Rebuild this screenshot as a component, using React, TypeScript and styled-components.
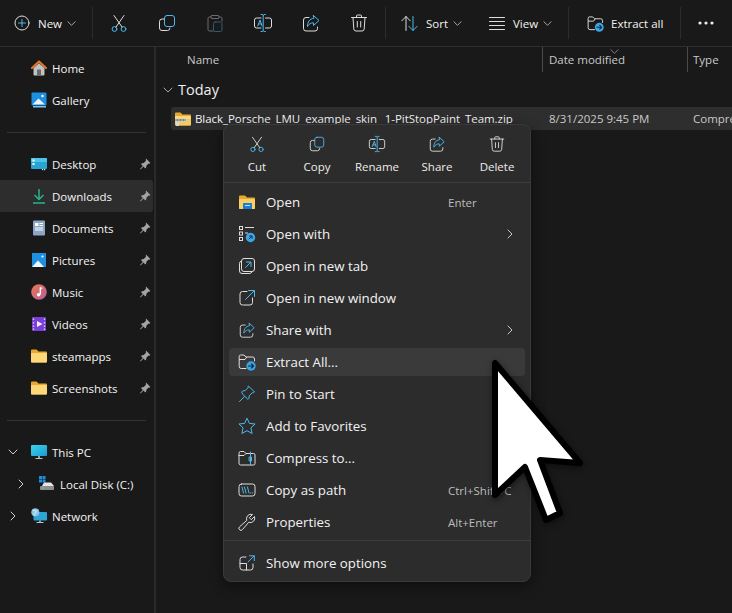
import React from "react";
import styled, { createGlobalStyle } from "styled-components";

const W = "#dedede";
const B = "#4fb8ee";

const Global = createGlobalStyle`
  html, body { margin: 0; padding: 0; background: #191919; }
  * { box-sizing: border-box; }
`;

const Window = styled.div`
  position: relative;
  width: 732px;
  height: 613px;
  overflow: hidden;
  background: #191919;
  color: #fff;
  font-family: "Open Sans", "Noto Sans", sans-serif;
  font-size: 11.5px;
`;

const Toolbar = styled.div`
  display: flex;
  align-items: center;
  height: 47px;
  border-bottom: 1px solid #2f2f2f;
`;

const Separator = styled.div`
  width: 1px;
  height: 32px;
  background: #2c2c2c;
  flex: none;
`;

const IconGroup = styled.div`
  display: flex;
  padding: 0 2px;
`;

const IconButton = styled.div`
  width: 48px;
  height: 32px;
  flex: none;
  display: flex;
  align-items: center;
  justify-content: center;
`;

const MoreButton = styled.div`
  width: 33px;
  height: 32px;
  flex: none;
  display: flex;
  align-items: center;
  justify-content: flex-end;
`;

const LabelButton = styled.div<{ $w: number; $pad: number; $gap?: number }>`
  width: ${(p) => p.$w}px;
  padding-left: ${(p) => p.$pad}px;
  height: 32px;
  flex: none;
  display: flex;
  align-items: center;
  gap: ${(p) => p.$gap ?? 8}px;
  color: #f2f2f2;
  font-size: 11.5px;
`;

const Caret = styled.span`
  display: flex;
  margin-left: -3px;
`;

const Body = styled.div`
  display: flex;
  height: 566px;
`;

const Sidebar = styled.nav`
  width: 156px;
  flex: none;
  padding: 5px 1px 0 0;
  border-right: 2px solid #2a2a2a;
`;

const NavRow = styled.div<{ $active?: boolean }>`
  display: flex;
  align-items: center;
  height: 32px;
  background: ${(p) => (p.$active ? "#2d2d2d" : "transparent")};
  border-radius: 0 3px 3px 0;
`;

const Expander = styled.span<{ $w: number }>`
  width: ${(p) => p.$w}px;
  flex: none;
  display: flex;
  justify-content: flex-end;
  padding-right: 13px;
`;

const NavIcon = styled.span`
  width: 16px;
  height: 16px;
  flex: none;
  display: flex;
  margin-right: 5px;
`;

const NavLabel = styled.span`
  flex: 1;
  white-space: nowrap;
  color: #f4f4f4;
`;

const PinSlot = styled.span`
  width: 12px;
  margin-right: 2px;
  display: flex;
`;

const NavDivider = styled.div`
  height: 32px;
  display: flex;
  align-items: center;
  padding: 0 7px;
  &::after {
    content: "";
    flex: 1;
    height: 1px;
    background: #333;
  }
`;

const Content = styled.main`
  flex: 1;
  min-width: 0;
  position: relative;
  color: #fff;
`;

const HeaderRow = styled.div`
  display: flex;
  height: 25px;
  color: #c9c9c9;
  position: relative;
`;

const HeaderCell = styled.div<{ $w: number; $pad: number; $line?: boolean }>`
  width: ${(p) => p.$w}px;
  flex: none;
  padding: 5px 0 0 ${(p) => p.$pad}px;
  border-left: ${(p) => (p.$line ? "1px solid #4a4a4a" : "none")};
  white-space: nowrap;
`;

const SortMark = styled.span`
  position: absolute;
  left: 454px;
  top: 0;
  display: flex;
`;

const GroupHeader = styled.div`
  display: flex;
  align-items: center;
  height: 35px;
  padding-left: 7px;
  gap: 5px;
  font-size: 14.5px;
  color: #f0f0f0;
`;

const FileRow = styled.div`
  display: flex;
  align-items: center;
  height: 23px;
  margin-left: 15px;
  background: #2e2e2e;
  border-radius: 3px 0 0 3px;
  white-space: nowrap;
  color: #f4f4f4;
`;

const FileName = styled.div`
  width: 378px;
  flex: none;
  display: flex;
  align-items: center;
  gap: 4px;
  padding-left: 4px;
  letter-spacing: -0.055px;
`;

const FileCell = styled.div<{ $w: number }>`
  width: ${(p) => p.$w}px;
  flex: none;
  color: #c9c9c9;
`;

const Menu = styled.div`
  position: absolute;
  left: 223px;
  top: 124px;
  width: 308px;
  height: 458px;
  background: #2c2c2c;
  border: 1px solid #3a3a3a;
  border-radius: 8px;
  box-shadow: 0 4px 14px rgba(0, 0, 0, 0.45);
  font-size: 13.3px;
`;

const QuickBar = styled.div`
  display: grid;
  grid-template-columns: repeat(5, 60px);
  height: 58px;
  padding: 10px 0 0 3px;
  border-bottom: 1px solid #3d3d3d;
`;

const QuickAction = styled.div`
  display: flex;
  flex-direction: column;
  align-items: center;
  gap: 6px;
  font-size: 11.5px;
  color: #ececec;
`;

const MenuList = styled.div`
  padding: 3px 5px 0;
`;

const MenuRow = styled.div<{ $hover?: boolean }>`
  position: relative;
  display: flex;
  align-items: center;
  height: 28px;
  margin: 2px 0 4px;
  padding-left: 9px;
  border-radius: 4px;
  background: ${(p) => (p.$hover ? "#3a3a3a" : "transparent")};
  color: #f2f2f2;
`;

const MenuIcon = styled.span`
  width: 18px;
  height: 18px;
  flex: none;
  display: flex;
  margin-right: 10px;
`;

const MenuText = styled.span`
  flex: none;
  white-space: nowrap;
`;

const Shortcut = styled.span`
  position: absolute;
  left: 219px;
  font-size: 11.5px;
  color: #bdbdbd;
`;

const SubArrow = styled.span`
  position: absolute;
  right: 10px;
  display: flex;
`;

const MenuDivider = styled.div`
  height: 1px;
  background: #3d3d3d;
  margin: 2px -5px 8px;
`;

const Pointer = styled.svg`
  position: absolute;
  left: 484px;
  top: 352px;
  filter: drop-shadow(1px 2px 3px rgba(0, 0, 0, 0.5));
`;

type Sz = { s?: number };

const Svg = ({ s = 20, v = 20, children, o }: { s?: number; v?: number; children: React.ReactNode; o?: number }) => (
  <svg width={s} height={s} viewBox={`0 0 ${v} ${v}`} fill="none" strokeLinecap="round" strokeLinejoin="round" opacity={o}>
    {children}
  </svg>
);

const Chevron = ({ dir, c = "#b8b8b8", s = 10 }: { dir: "down" | "right" | "up"; c?: string; s?: number }) => (
  <svg width={s} height={s} viewBox="0 0 10 10" fill="none" stroke={c} strokeWidth="1" strokeLinecap="round" strokeLinejoin="round">
    {dir === "down" && <path d="M1 3l4 4 4-4" />}
    {dir === "up" && <path d="M1 7l4-4 4 4" />}
    {dir === "right" && <path d="M3 1l4 4-4 4" />}
  </svg>
);

const Plus = () => (
  <Svg s={16} v={16}>
    <circle cx="8" cy="8" r="7" stroke={W} />
    <path d="M8 4.5v7M4.5 8h7" stroke={B} />
  </Svg>
);
const CutI = ({ s = 20 }: Sz) => (
  <Svg s={s}>
    <circle cx="5.5" cy="16" r="2.4" stroke={B} />
    <circle cx="14.5" cy="16" r="2.4" stroke={B} />
    <path d="M7 14L15 2.5M13 14L5 2.5" stroke={W} />
  </Svg>
);
const CopyI = ({ s = 20 }: Sz) => (
  <Svg s={s}>
    <rect x="7.5" y="2.5" width="10" height="11" rx="2.5" stroke={B} />
    <path d="M7 6H5a2.5 2.5 0 0 0-2.5 2.5V15A2.5 2.5 0 0 0 5 17.5h5.500A2.5 2.5 0 0 0 13 15" stroke={W} />
  </Svg>
);
const PasteI = () => (
  <Svg s={20} o={0.42}>
    <path d="M6 4H4.5A1.5 1.5 0 0 0 3 5.5v11A1.5 1.5 0 0 0 4.5 18H8M14 4h1.5A1.5 1.5 0 0 1 17 5.5V8" stroke={W} />
    <rect x="6" y="2.5" width="8" height="3" rx="1" stroke={W} />
    <rect x="8.5" y="9" width="8.5" height="9.5" rx="1.5" stroke={B} />
  </Svg>
);
const RenameI = ({ s = 20 }: Sz) => (
  <Svg s={s}>
    <path d="M8 5H3.5A2 2 0 0 0 1.5 7v6A2 2 0 0 0 3.5 15H8M12.5 5h4A2 2 0 0 1 18.5 7v6a2 2 0 0 1-2 2h-4" stroke={W} />
    <path d="M8 1.5h1.300L10.200 2.300 11.100 1.500H12.400M10.200 2.300V17.700M8 18.500h1.300l.9-.8.9.8h1.300" stroke={B} />
    <path d="M4.800 13L7 7l2 6M5.500 11h3" stroke={B} />
  </Svg>
);
const ShareI = ({ s = 20 }: Sz) => (
  <Svg s={s}>
    <path d="M8 4.5H5A2.5 2.5 0 0 0 2.5 7v8.500A2.5 2.5 0 0 0 5 18h9a2.5 2.5 0 0 0 2.5-2.5V14" stroke={W} />
    <path d="M12.5 2.5l5.500 5-5.500 5V9.800C10 9.800 8 10.800 6.500 13.500 6.500 9 8.500 5.800 12.500 5.300z" stroke={B} />
  </Svg>
);
const DeleteI = ({ s = 20 }: Sz) => (
  <Svg s={s}>
    <path d="M2.5 4.5h15M7.5 4.5V3a1 1 0 0 1 1-1h3a1 1 0 0 1 1 1v1.500M4 4.500l.8 11.500A2.200 2.200 0 0 0 7 18h6a2.200 2.200 0 0 0 2.200-2L16 4.500M8.300 8.500v5.500M11.700 8.500v5.500" stroke={W} />
  </Svg>
);
const SortI = () => (
  <Svg s={17} v={17}>
    <path d="M5 15.5V1.500M.8 5.800L5 1.500l4.200 4.300" stroke={W} />
    <path d="M12 1.500v14M7.800 11.200l4.200 4.300 4.200-4.300" stroke={B} />
  </Svg>
);
const ViewI = () => (
  <Svg s={16} v={16}>
    <path d="M0.500 2.500h15M0.500 6.500h15M0.500 10.500h15M0.500 14.500h15" stroke={W} />
  </Svg>
);
const ExtractI = ({ s = 18 }: Sz) => (
  <svg width={s} height={s} viewBox="0 0 18 18" fill="none" strokeLinecap="round" strokeLinejoin="round">
    <path d="M8 15.500H3.200A2 2 0 0 1 1.200 13.500V3.500A1.500 1.500 0 0 1 2.700 2H6l2 2h6.500A2 2 0 0 1 16.500 6v2M1.500 6.500H7L8.500 4.300" stroke={W} />
    <circle cx="13" cy="13" r="4.700" fill="#3aa6e8" />
    <path d="M10.500 13h5M13.500 11l2 2-2 2" stroke="#10253a" strokeWidth="1.100" />
  </svg>
);
const Dots = () => (
  <svg width="16" height="4" viewBox="0 0 16 4" fill="#ededed">
    <circle cx="2" cy="2" r="1.600" />
    <circle cx="8" cy="2" r="1.600" />
    <circle cx="14" cy="2" r="1.600" />
  </svg>
);

/* Sidebar icons */
const HomeN = () => (
  <svg width="16" height="16" viewBox="0 0 16 16">
    <path d="M2.500 8L8 3.200 13.500 8v6.500a1 1 0 0 1-1 1h-9a1 1 0 0 1-1-1z" fill="#c2c2c2" />
    <rect x="6" y="9.500" width="4" height="6" rx="0.500" fill="#6a6a6a" />
    <path d="M1 8L8 1.500 15 8" fill="none" stroke="#e2752a" strokeWidth="2.200" strokeLinecap="round" strokeLinejoin="round" />
  </svg>
);
const GalleryN = () => (
  <svg width="16" height="16" viewBox="0 0 16 16">
    <rect x="0.500" y="0.500" width="15" height="13" rx="1" fill="#1d8fe0" />
    <path d="M1.500 12.500L7.500 6.500l6.500 6z" fill="#e8f4fc" />
    <circle cx="11.500" cy="4" r="1.200" fill="#fff" />
    <rect x="2" y="14" width="13" height="1.500" fill="#7ec4f0" />
  </svg>
);
const DesktopN = () => (
  <svg width="16" height="16" viewBox="0 0 16 16">
    <rect x="0" y="2" width="16" height="11" rx="1" fill="#27a6d6" />
    <rect x="0" y="2" width="16" height="4" rx="1" fill="#4cc5e8" />
    <rect x="1.500" y="3.500" width="2" height="2" fill="#fff" />
    <rect x="1.500" y="7" width="2" height="2" fill="#fff" />
    <rect x="11" y="13" width="1.200" height="1.200" fill="#ddd" />
    <rect x="13" y="13" width="1.200" height="1.200" fill="#ddd" />
  </svg>
);
const DownloadN = () => (
  <svg width="16" height="16" viewBox="0 0 16 16" fill="none" stroke="#22b78c" strokeWidth="1.500">
    <path d="M8 1v10M3.500 7l4.500 4.500L12.500 7M2 15h12" />
  </svg>
);
const DocN = () => (
  <svg width="16" height="16" viewBox="0 0 16 16">
    <rect x="2" y="0.500" width="12" height="15" rx="1" fill="#8ba5c4" />
    <rect x="4" y="3" width="3.500" height="3" fill="#fff" />
    <path d="M8.500 3.500H12M8.500 5.500H12M4 8H12M4 10H12" stroke="#fff" strokeWidth="1" />
  </svg>
);
const PicN = () => (
  <svg width="16" height="16" viewBox="0 0 16 16">
    <rect x="1" y="1" width="14" height="14" fill="#1f8fe3" />
    <path d="M1 15L7 8.500 13 15z" fill="#f2f8fc" />
    <circle cx="11.500" cy="4.500" r="1.100" fill="#fff" />
  </svg>
);
const MusicN = () => (
  <svg width="16" height="16" viewBox="0 0 16 16">
    <defs>
      <linearGradient id="mg" x1="0" y1="0" x2="1" y2="1">
        <stop offset="0" stopColor="#f0784a" />
        <stop offset="1" stopColor="#b05fa0" />
      </linearGradient>
    </defs>
    <circle cx="8" cy="8" r="7.800" fill="url(#mg)" />
    <path d="M9.300 3.500v7" stroke="#fff" strokeWidth="1.300" />
    <circle cx="7.600" cy="10.800" r="1.800" fill="#fff" />
    <path d="M9.300 3.500l2 1" stroke="#fff" strokeWidth="1.300" />
  </svg>
);
const VideoN = () => (
  <svg width="16" height="16" viewBox="0 0 16 16">
    <rect x="1" y="1" width="14" height="14" rx="1" fill="#7a3fd6" />
    <path d="M6 5l5.500 3L6 11z" fill="#f4eeff" />
    <path d="M2.500 2.500v1.500M2.500 6v1.500M2.500 9.500V11M2.500 12.500V14M13.500 2.500v1.500M13.500 6v1.500M13.500 9.500V11M13.500 12.500V14" stroke="#d8c6f7" strokeWidth="1.300" />
  </svg>
);
const FolderN = () => (
  <svg width="16" height="16" viewBox="0 0 16 16">
    <path d="M0 2.500A1 1 0 0 1 1 1.500h4.500L7.500 3.500H15a1 1 0 0 1 1 1v9a1 1 0 0 1-1 1H1a1 1 0 0 1-1-1z" fill="#e8a82e" />
    <path d="M0 6A1 1 0 0 1 1 5h14a1 1 0 0 1 1 1v7.500a1 1 0 0 1-1 1H1a1 1 0 0 1-1-1z" fill="#fcd879" />
  </svg>
);
const PcN = () => (
  <svg width="16" height="16" viewBox="0 0 16 16">
    <defs>
      <linearGradient id="pg" x1="0" y1="0" x2="1" y2="1">
        <stop offset="0" stopColor="#3cd2ee" />
        <stop offset="1" stopColor="#1a9ad0" />
      </linearGradient>
    </defs>
    <rect x="0" y="1" width="16" height="11" rx="1" fill="url(#pg)" />
    <rect x="7" y="12" width="2" height="2" fill="#8aa0ad" />
    <rect x="4.500" y="14" width="7" height="1" fill="#b8c6ce" />
  </svg>
);
const DiskN = () => (
  <svg width="16" height="16" viewBox="0 0 16 16">
    <rect x="0" y="0" width="3" height="3" fill="#1c8fe0" />
    <rect x="3.500" y="0" width="3" height="3" fill="#1c8fe0" />
    <rect x="0" y="3.500" width="3" height="3" fill="#1c8fe0" />
    <rect x="3.500" y="3.500" width="3" height="3" fill="#1c8fe0" />
    <path d="M3 10L5 6.500h7l3 3.500z" fill="#e6e6e6" />
    <rect x="1" y="10" width="14" height="4" rx="0.800" fill="#8e8e8e" />
    <rect x="3" y="11.500" width="2" height="1" fill="#5fd08a" />
  </svg>
);
const NetN = () => (
  <svg width="16" height="16" viewBox="0 0 16 16">
    <rect x="2.500" y="4" width="13.500" height="8.500" rx="1" fill="#2aa5d6" />
    <rect x="8" y="12.500" width="2" height="1.700" fill="#8aa0ad" />
    <rect x="5.500" y="14" width="7" height="1" fill="#b8c6ce" />
    <circle cx="4.300" cy="4.300" r="4" fill="#8fc6e6" />
    <path d="M2 2.500c2-1 3.500 0 3 1.500S2.500 6 3.500 7.500" stroke="#e6f4fb" fill="none" />
  </svg>
);
const PinN = () => (
  <svg width="12" height="12" viewBox="0 0 12 12" fill="#a3a3a3">
    <path d="M7 .6l4.400 4.400-1 .7-.8-.2L7.400 7.700l-.2 1.900-.9.900-1.800-1.900-3 2.800-.5-.5 2.800-3L2 6.100l.9-.9 1.900-.2 2.200-2.200-.2-.8z" />
  </svg>
);

const ZipI = () => (
  <svg width="16" height="16" viewBox="0 0 16 16">
    <path d="M0 2.500A1 1 0 0 1 1 1.500h4.500L7.500 3.500H15a1 1 0 0 1 1 1v9a1 1 0 0 1-1 1H1a1 1 0 0 1-1-1z" fill="#e8a82e" />
    <path d="M0 6A1 1 0 0 1 1 5h14a1 1 0 0 1 1 1v2.500H0z" fill="#fcd879" />
    <path d="M0 8.500h16v5a1 1 0 0 1-1 1H1a1 1 0 0 1-1-1z" fill="#f4c862" />
    <rect x="0" y="7.500" width="12" height="3" fill="#cfcfcf" />
    <path d="M1 8v2M2.500 8v2M4 8v2M5.500 8v2M7 8v2M8.500 8v2M10 8v2" stroke="#666" strokeWidth="0.800" />
    <rect x="1" y="11" width="3" height="4" rx="0.500" fill="#d8d8d8" />
  </svg>
);

/* Menu icons */
const OpenM = () => (
  <svg width="18" height="18" viewBox="0 0 18 18">
    <path d="M1 3.500A1 1 0 0 1 2 2.500h5L9 4.500h7a1 1 0 0 1 1 1V15a1 1 0 0 1-1 1H2a1 1 0 0 1-1-1z" fill="#e8a82e" />
    <path d="M1 7a1 1 0 0 1 1-1h14a1 1 0 0 1 1 1v8a1 1 0 0 1-1 1H2a1 1 0 0 1-1-1z" fill="#fbcf62" />
    <rect x="5" y="10" width="9" height="6" rx="0.500" fill="#1a7fd4" />
    <rect x="7" y="12" width="5" height="1" fill="#bfe0f8" />
  </svg>
);
const OpenWithM = () => (
  <svg width="18" height="18" viewBox="0 0 18 18" fill="none">
    <rect x="1.500" y="1.500" width="3" height="3" stroke={W} />
    <rect x="1.500" y="7" width="3" height="3" stroke={W} />
    <rect x="1.500" y="12.500" width="3" height="3" stroke={W} />
    <path d="M7 2.500h9M7 8h3" stroke={W} />
    <circle cx="12.500" cy="12.500" r="4.700" fill="#3aa6e8" />
    <path d="M10.800 14.200l3-3M11.300 11h2.700v2.700" stroke="#10253a" />
  </svg>
);
const NewTabM = () => (
  <svg width="18" height="18" viewBox="0 0 18 18" fill="none" strokeLinecap="round">
    <rect x="3.500" y="1.500" width="13" height="13" rx="2.500" stroke={W} />
    <path d="M3 4.200A2.200 2.200 0 0 0 1.500 6.300v7.700A2.500 2.500 0 0 0 4 16.500h7.700a2.200 2.200 0 0 0 2.100-1.500" stroke={W} />
    <path d="M7.500 10.500l5-5M8.500 5h4.500v4.500" stroke={B} />
  </svg>
);
const NewWinM = () => (
  <svg width="18" height="18" viewBox="0 0 18 18" fill="none" strokeLinecap="round">
    <path d="M9 2.500H4.500A2.500 2.500 0 0 0 2 5v8.500A2.500 2.500 0 0 0 4.500 16H12a2.500 2.500 0 0 0 2.500-2.500V9" stroke={W} />
    <path d="M7.500 10.500L16 2M10.500 1.500H16.500V7.500" stroke={B} />
  </svg>
);
const PinM = () => (
  <svg width="18" height="18" viewBox="0 0 18 18" fill="none" stroke={B} strokeLinejoin="round" strokeLinecap="round">
    <path d="M11 1.500l5.500 5.500-1.200.9-1-.2-3 3-.3 2.500-1.200 1.200-2.300-2.400-2.200-2.200L3.500 7.100l1.200-1.200 2.500-.3 3-3-.2-1z" />
    <path d="M6.500 11.500L1.500 16.500" />
  </svg>
);
const StarM = () => (
  <svg width="18" height="18" viewBox="0 0 18 18" fill="none" stroke={B} strokeLinejoin="round">
    <path d="M9 1.200l2.400 5.200 5.700.6-4.200 3.900 1.200 5.600L9 13.700l-5.100 2.800 1.200-5.600L.9 7l5.700-.6z" />
  </svg>
);
const CompressM = () => (
  <svg width="18" height="18" viewBox="0 0 18 18" fill="none" strokeLinejoin="round" strokeLinecap="round">
    <path d="M1 4A1.500 1.500 0 0 1 2.500 2.500H6L8 4.500h7.500A1.500 1.500 0 0 1 17 6v8.500A1.500 1.500 0 0 1 15.500 16h-13A1.500 1.500 0 0 1 1 14.500zM1 6.500h5l2-2" stroke={W} />
    <path d="M12.500 3v13" stroke={B} />
    <rect x="11.500" y="8" width="2" height="4" stroke={B} />
  </svg>
);
const PathM = () => (
  <svg width="18" height="18" viewBox="0 0 18 18" fill="none" strokeLinecap="round">
    <rect x="1" y="3" width="16" height="12" rx="2.500" stroke={W} />
    <path d="M4 6l1.500 6M6.500 6L8 12M9.500 6l1.500 6" stroke={B} />
    <path d="M12.800 11.800h.1M14.500 11.800h.1" stroke={B} strokeWidth="1.200" />
  </svg>
);
const WrenchM = () => (
  <svg width="18" height="18" viewBox="0 0 18 18" fill="none" stroke={W} strokeLinejoin="round">
    <path d="M16.500 3.500L13.300 6.700 11.300 4.700 14.500 1.500A4.500 4.500 0 0 0 8.800 7.400L1.700 13.700A2 2 0 1 0 4.500 16.500L10.700 9.300A4.500 4.500 0 0 0 16.500 3.500z" />
  </svg>
);
const MoreM = () => (
  <svg width="18" height="18" viewBox="0 0 18 18" fill="none" strokeLinecap="round">
    <path d="M8 3H4.500A2.500 2.500 0 0 0 2 5.500v8A2.500 2.500 0 0 0 4.500 16h8A2.500 2.500 0 0 0 15 13.500V10M2 9.500h6.500V16" stroke={W} />
    <path d="M10 8l6-6M11.500 1.800h4.800v4.800" stroke={B} />
  </svg>
);

const pinned = [
  ["Desktop", <DesktopN />],
  ["Downloads", <DownloadN />],
  ["Documents", <DocN />],
  ["Pictures", <PicN />],
  ["Music", <MusicN />],
  ["Videos", <VideoN />],
  ["steamapps", <FolderN />],
  ["Screenshots", <FolderN />],
] as const;

const quick = [
  ["Cut", <CutI s={18} />],
  ["Copy", <CopyI s={18} />],
  ["Rename", <RenameI s={18} />],
  ["Share", <ShareI s={18} />],
  ["Delete", <DeleteI s={18} />],
] as const;

type Item = { label: string; icon: React.ReactNode; key?: string; sub?: boolean; hover?: boolean };
const items: Item[] = [
  { label: "Open", icon: <OpenM />, key: "Enter" },
  { label: "Open with", icon: <OpenWithM />, sub: true },
  { label: "Open in new tab", icon: <NewTabM /> },
  { label: "Open in new window", icon: <NewWinM /> },
  { label: "Share with", icon: <ShareI s={18} />, sub: true },
  { label: "Extract All...", icon: <ExtractI />, hover: true },
  { label: "Pin to Start", icon: <PinM /> },
  { label: "Add to Favorites", icon: <StarM /> },
  { label: "Compress to...", icon: <CompressM /> },
  { label: "Copy as path", icon: <PathM />, key: "Ctrl+Shift+C" },
  { label: "Properties", icon: <WrenchM />, key: "Alt+Enter" },
];

const Row = ({ item }: { item: Item }) => (
  <MenuRow $hover={item.hover}>
    <MenuIcon>{item.icon}</MenuIcon>
    <MenuText>{item.label}</MenuText>
    {item.key && <Shortcut>{item.key}</Shortcut>}
    {item.sub && (
      <SubArrow>
        <Chevron dir="right" c="#c8c8c8" />
      </SubArrow>
    )}
  </MenuRow>
);

export default function App() {
  return (
    <Window>
      <Global />
      <Toolbar>
        <LabelButton $w={92} $pad={14}>
          <Plus />
          <span>New</span>
          <Caret><Chevron dir="down" s={9} /></Caret>
        </LabelButton>
        <Separator />
        <IconGroup>
          <IconButton><CutI /></IconButton>
          <IconButton><CopyI /></IconButton>
          <IconButton><PasteI /></IconButton>
          <IconButton><RenameI /></IconButton>
          <IconButton><ShareI /></IconButton>
          <IconButton><DeleteI /></IconButton>
        </IconGroup>
        <Separator />
        <LabelButton $w={90} $pad={15}>
          <SortI />
          <span>Sort</span>
          <Caret><Chevron dir="down" s={9} /></Caret>
        </LabelButton>
        <LabelButton $w={92} $pad={13}>
          <ViewI />
          <span>View</span>
          <Caret><Chevron dir="down" s={9} /></Caret>
        </LabelButton>
        <Separator />
        <LabelButton $w={111} $pad={18} $gap={7}>
          <ExtractI s={17} />
          <span>Extract all</span>
        </LabelButton>
        <Separator />
        <MoreButton><Dots /></MoreButton>
      </Toolbar>
      <Body>
        <Sidebar>
          <NavRow><Expander $w={31} /><NavIcon><HomeN /></NavIcon><NavLabel>Home</NavLabel></NavRow>
          <NavRow><Expander $w={31} /><NavIcon><GalleryN /></NavIcon><NavLabel>Gallery</NavLabel></NavRow>
          <NavDivider />
          {pinned.map(([label, icon]) => (
            <NavRow key={label} $active={label === "Downloads"}>
              <Expander $w={31} />
              <NavIcon>{icon}</NavIcon>
              <NavLabel>{label}</NavLabel>
              <PinSlot><PinN /></PinSlot>
            </NavRow>
          ))}
          <NavDivider />
          <NavRow><Expander $w={31}><Chevron dir="down" c="#d0d0d0" /></Expander><NavIcon><PcN /></NavIcon><NavLabel>This PC</NavLabel></NavRow>
          <NavRow><Expander $w={39}><Chevron dir="right" c="#d0d0d0" /></Expander><NavIcon><DiskN /></NavIcon><NavLabel>Local Disk (C:)</NavLabel></NavRow>
          <NavRow><Expander $w={31}><Chevron dir="right" c="#d0d0d0" /></Expander><NavIcon><NetN /></NavIcon><NavLabel>Network</NavLabel></NavRow>
        </Sidebar>
        <Content>
          <HeaderRow>
            <HeaderCell $w={386} $pad={31}>Name</HeaderCell>
            <HeaderCell $w={145} $pad={6} $line>Date modified</HeaderCell>
            <HeaderCell $w={60} $pad={5} $line>Type</HeaderCell>
            <SortMark><Chevron dir="down" c="#8a8a8a" s={9} /></SortMark>
          </HeaderRow>
          <GroupHeader>
            <Chevron dir="down" c="#a8a8a8" />
            <span>Today</span>
          </GroupHeader>
          <FileRow>
            <FileName><ZipI /><span>Black_Porsche_LMU_example_skin_ 1-PitStopPaint_Team.zip</span></FileName>
            <FileCell $w={144}>8/31/2025 9:45 PM</FileCell>
            <FileCell $w={60}>Compressed</FileCell>
          </FileRow>
        </Content>
      </Body>
      <Menu>
        <QuickBar>
          {quick.map(([label, icon]) => (
            <QuickAction key={label}>{icon}<span>{label}</span></QuickAction>
          ))}
        </QuickBar>
        <MenuList>
          {items.map((it) => <Row key={it.label} item={it} />)}
          <MenuDivider />
          <Row item={{ label: "Show more options", icon: <MoreM /> }} />
        </MenuList>
      </Menu>
      <Pointer width="110" height="180" viewBox="484 352 110 180">
        <path d="M495 363V495L525 467 546 520 560 513 540 460 580 463Z" fill="#fff" stroke="#000" strokeWidth="6" strokeLinejoin="round" />
      </Pointer>
    </Window>
  );
}
